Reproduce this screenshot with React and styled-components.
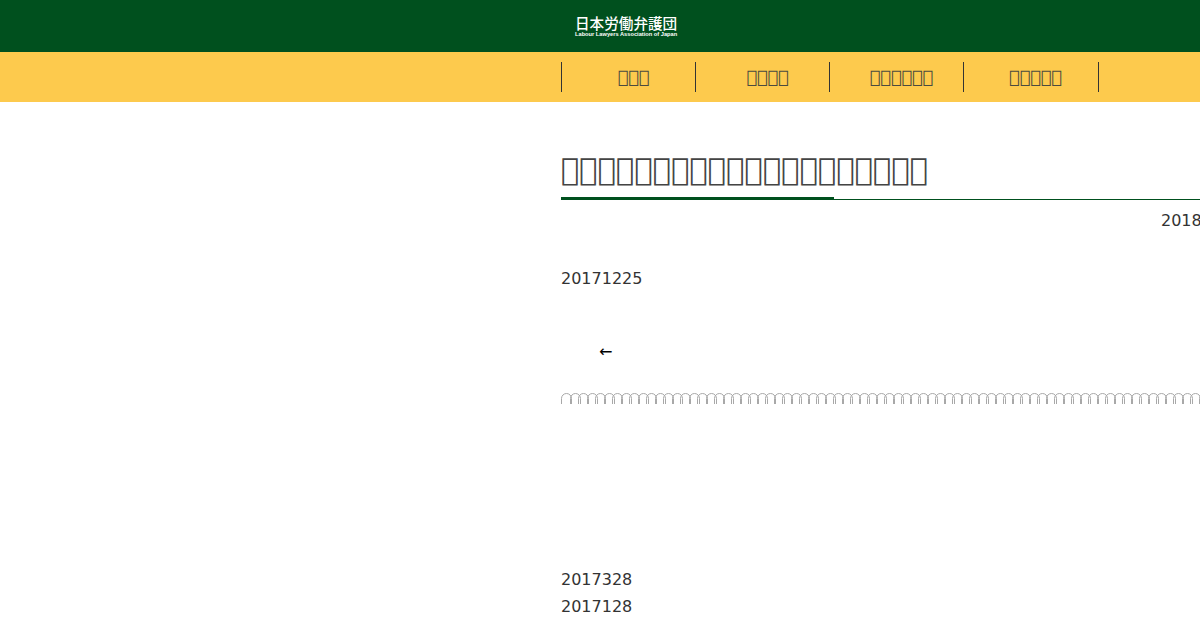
import React from "react";
import styled, { createGlobalStyle } from "styled-components";

const TOFU = "\uE000";
const tofu = (n) => TOFU.repeat(n);

const GlobalStyle = createGlobalStyle`
  html, body {
    margin: 0;
    padding: 0;
    background: #fff;
    overflow: hidden;
    font-family: "DejaVu Sans", sans-serif;
    color: #333;
  }
`;

const Page = styled.div`
  width: 1200px;
  height: 630px;
  overflow: hidden;
  opacity: 0.999;
`;

const Header = styled.header`
  height: 52px;
  background: #00501e;
  display: flex;
  padding-left: 575px;
`;

const Logo = styled.div`
  width: 103px;
  padding-top: 14px;
  color: #fff;
  text-align: left;
`;

const LogoTitle = styled.div`
  font-family: "Noto Sans CJK JP", sans-serif;
  font-size: 14.6px;
  font-weight: 500;
  line-height: 17px;
  white-space: nowrap;
`;

const LogoSub = styled.div`
  font-family: "Liberation Sans", sans-serif;
  font-size: 5.7px;
  font-weight: 700;
  line-height: 6px;
  white-space: nowrap;
`;

const NavBar = styled.nav`
  height: 50px;
  background: #fdca4d;
  display: flex;
  align-items: center;
  padding-left: 561px;
`;

const NavItem = styled.a`
  width: 134px;
  height: 30px;
  flex: none;
  box-sizing: border-box;
  padding-left: 10px;
  border-left: 1px solid #333;
  font-size: 17.6px;
  line-height: 30px;
  text-align: center;
  color: #4a4a40;

  &:last-child {
    width: 136px;
    padding-left: 9px;
    border-right: 1px solid #333;
  }
`;

const Main = styled.main`
  margin-left: 561px;
  width: 1000px;
`;

const Title = styled.h1`
  margin: 0;
  padding-top: 47px;
  height: 98px;
  box-sizing: border-box;
  position: relative;
  font-size: 30.6px;
  font-weight: 400;
  line-height: 42px;
  color: #444;
  border-bottom: 1px solid #00501e;

  &::after {
    content: "";
    position: absolute;
    left: 0;
    bottom: -1px;
    width: 273px;
    height: 3px;
    background: #00501e;
  }
`;

const PostDate = styled.p`
  margin: 10px 0 0;
  padding-left: 600px;
  font-size: 16px;
  line-height: 22px;
  white-space: nowrap;
`;

const Para = styled.p`
  margin: 36px 0 0;
  font-size: 16px;
  line-height: 22px;
`;

const BackLink = styled.p`
  margin: 51px 0 0 38px;
  font-size: 16px;
  line-height: 22px;
  color: #000;
`;

const Arches = styled.div`
  margin-top: 30px;
  display: flex;
  height: 11px;
  overflow: hidden;
`;

const Arch = styled.span`
  flex: none;
  width: 11px;
  height: 18px;
  margin-right: -2.5px;
  box-sizing: border-box;
  border: 1px solid #a8a8a8;
  border-radius: 6px;
`;

const DateLine = styled.p`
  margin: ${(p) => p.$gap}px 0 0;
  font-size: 16px;
  line-height: 22px;
`;

const NAV = [3, 4, 6, 5];

export default function App() {
  return (
    <Page>
      <GlobalStyle />
      <Header>
        <Logo>
          <LogoTitle>日本労働弁護団</LogoTitle>
          <LogoSub>Labour Lawyers Association of Japan</LogoSub>
        </Logo>
      </Header>
      <NavBar>
        {NAV.map((n, i) => (
          <NavItem key={i}>{tofu(n)}</NavItem>
        ))}
      </NavBar>
      <Main>
        <Title>{tofu(20)}</Title>
        <PostDate>2018</PostDate>
        <Para>20171225</Para>
        <BackLink>←</BackLink>
        <Arches>
          {Array.from({ length: 80 }, (_, i) => (
            <Arch key={i} />
          ))}
        </Arches>
        <DateLine $gap={165}>2017328</DateLine>
        <DateLine $gap={5}>2017128</DateLine>
      </Main>
    </Page>
  );
}
